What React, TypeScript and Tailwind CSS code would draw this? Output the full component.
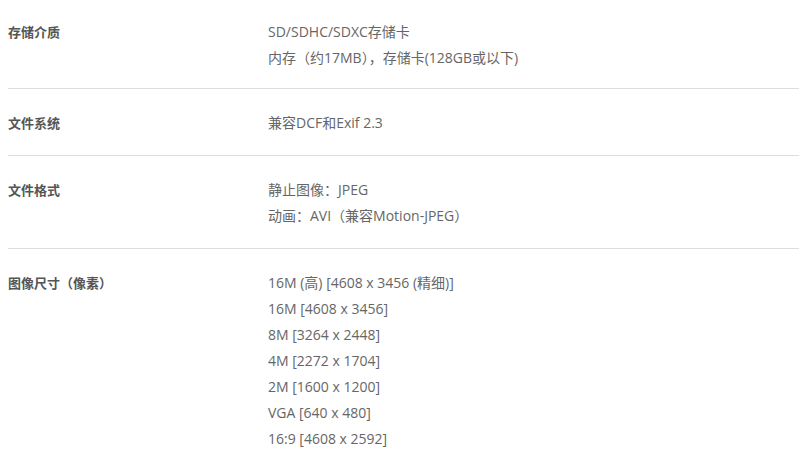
import React from "react";

interface SpecRow {
  label: string;
  values: string[];
}

const SPECS: SpecRow[] = [
  { label: "存储介质", values: ["SD/SDHC/SDXC存储卡", "内存（约17MB），存储卡(128GB或以下)"] },
  { label: "文件系统", values: ["兼容DCF和Exif 2.3"] },
  { label: "文件格式", values: ["静止图像：JPEG", "动画：AVI（兼容Motion-JPEG）"] },
  {
    label: "图像尺寸（像素）",
    values: [
      "16M (高) [4608 x 3456 (精细)]",
      "16M [4608 x 3456]",
      "8M [3264 x 2448]",
      "4M [2272 x 1704]",
      "2M [1600 x 1200]",
      "VGA [640 x 480]",
      "16:9 [4608 x 2592]",
    ],
  },
];

export default function App() {
  return (
    <div
      className="min-h-[464px] bg-white pl-2 overflow-hidden"
      style={{ fontFamily: '"Open Sans", "Noto Sans CJK SC", sans-serif' }}
    >
      {SPECS.map((row, i) => (
        <div
          key={row.label}
          className={`flex ${i === 0 ? "pt-[19px] pb-[17px]" : "pt-[21px] pb-[19px]"} ${
            i < SPECS.length - 1 ? "border-b border-[#dddddd]" : ""
          }`}
        >
          <div
            className="w-[260px] shrink-0 text-[13px] leading-[26px] font-bold text-[#555555]"
            style={{ fontFamily: '"Noto Sans CJK SC", sans-serif' }}
          >
            {row.label}
          </div>
          <div className="text-[14px] leading-[26px] text-[#666666]">
            {row.values.map((v) => (
              <div key={v}>{v}</div>
            ))}
          </div>
        </div>
      ))}
    </div>
  );
}
